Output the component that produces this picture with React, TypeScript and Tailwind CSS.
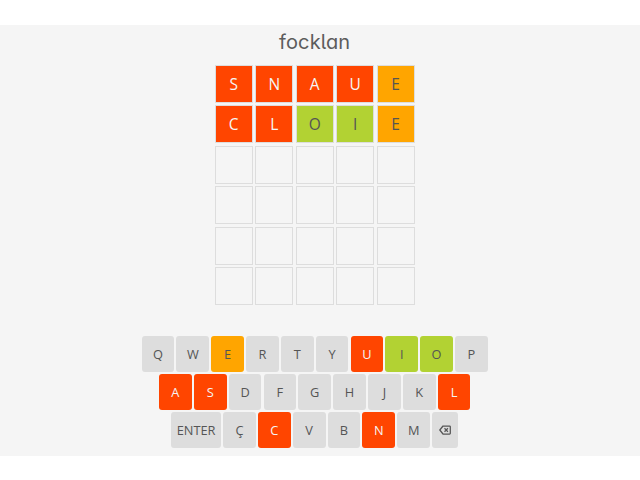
import { clsx } from 'clsx';

type Status = 'wrong' | 'misplaced' | 'correct';

const guesses: [string, Status][][] = [
  [['S', 'wrong'], ['N', 'wrong'], ['A', 'wrong'], ['U', 'wrong'], ['E', 'misplaced']],
  [['C', 'wrong'], ['L', 'wrong'], ['O', 'correct'], ['I', 'correct'], ['E', 'misplaced']],
];

const ROWS = 6;
const COLS = 5;

const keyRows = [
  ['Q', 'W', 'E', 'R', 'T', 'Y', 'U', 'I', 'O', 'P'],
  ['A', 'S', 'D', 'F', 'G', 'H', 'J', 'K', 'L'],
  ['ENTER', 'Ç', 'C', 'V', 'B', 'N', 'M', 'BACK'],
];

const statusCls: Record<Status, string> = {
  wrong: 'bg-[#ff4500] text-[#f5f5f5] font-medium',
  misplaced: 'bg-[#ffa500] text-[#555]',
  correct: 'bg-[#b2d233] text-[#555]',
};

const keyStatus: Record<string, Status> = Object.fromEntries(guesses.flat());

function BackspaceIcon() {
  return (
    <svg width="12" height="10" viewBox="0 0 12 10" fill="none" stroke="currentColor" strokeWidth="1.25" strokeLinejoin="round" aria-hidden>
      <path d="M4 1h6.6a.7.7 0 01.7.7v6.6a.7.7 0 01-.7.7H4L.8 5z" />
      <path d="M5.5 3.3l3.4 3.4M8.9 3.3L5.5 6.7" />
    </svg>
  );
}

function Cell({ guess }: { guess?: [string, Status] }) {
  return (
    <div className={clsx('w-[38.2px] h-[38.2px] pt-[1.2px] border border-[#ddd] flex items-center justify-center text-[15.5px] leading-none', guess && statusCls[guess[1]])}>
      {guess?.[0]}
    </div>
  );
}

function Key({ label }: { label: string }) {
  const status = keyStatus[label];
  return (
    <button
      aria-label={label === 'BACK' ? 'Backspace' : label}
      className={clsx(
        'h-[36px] rounded-[3px] flex items-center justify-center text-[12.8px] leading-none',
        label === 'ENTER' ? 'w-[49.8px]' : label === 'BACK' ? 'w-[26px]' : 'w-[32.7px]',
        status ? statusCls[status] : 'bg-[#ddd] text-[#555]',
      )}>
      {label === 'BACK' ? <BackspaceIcon /> : label}
    </button>
  );
}

export default function App() {
  return (
    <div className="h-[480px] bg-white pt-[25px] font-['Open_Sans',sans-serif]">
      <main className="h-[431px] bg-[#f5f5f5] flex flex-col items-center">
        <h1 className="h-[39.6px] pt-[5px] pr-[10.6px] font-['Inter',sans-serif] text-[20px] leading-[24px] tracking-[0.1px] text-[#5c5c5c] [font-feature-settings:'cv11','cv05']">focklan</h1>

        <div className="grid grid-cols-[repeat(5,38.2px)] gap-[2.3px] pr-[10.6px]">
          {Array.from({ length: ROWS * COLS }, (_, i) => (
            <Cell key={i} guess={guesses[Math.floor(i / COLS)]?.[i % COLS]} />
          ))}
        </div>

        <div className="mt-[31.2px] pr-[10.6px] flex flex-col gap-[2px]">
          {keyRows.map((row) => (
            <div key={row[0]} className="flex justify-center gap-[2.15px]">
              {row.map((label) => <Key key={label} label={label} />)}
            </div>
          ))}
        </div>
      </main>
    </div>
  );
}
